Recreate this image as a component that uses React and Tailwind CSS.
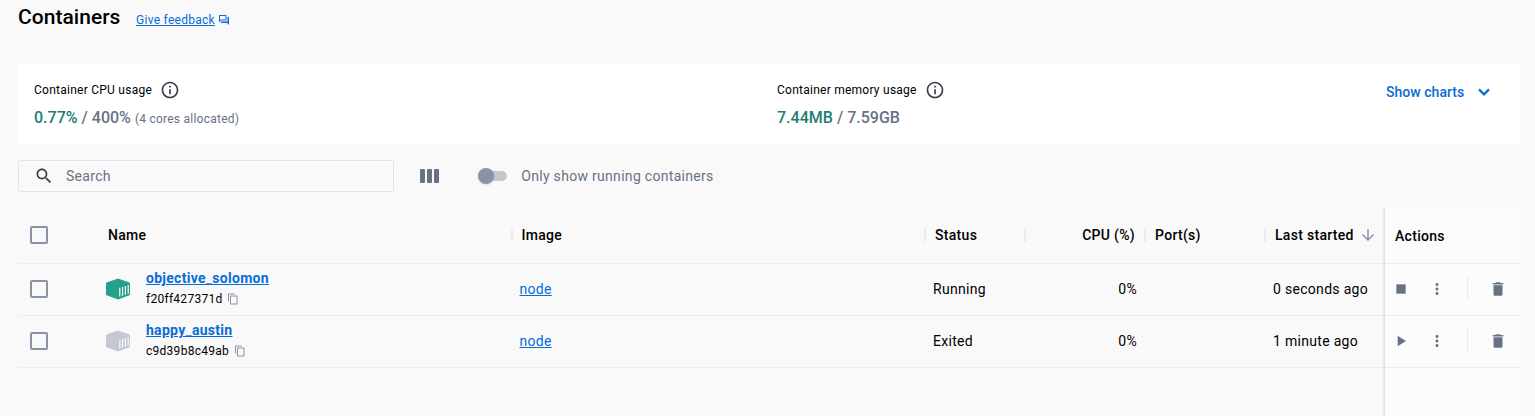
function Icon({ d, size, className = "" }) {
  return (
    <svg width={size} height={size} viewBox="0 0 24 24" fill="currentColor" className={`block shrink-0 ${className}`}>
      <path d={d} />
    </svg>
  );
}

const ICONS = {
  feedback: "M15 4v7H5.17L4 12.17V4h11m1-2H3c-.55 0-1 .45-1 1v14l4-4h10c.55 0 1-.45 1-1V3c0-.55-.45-1-1-1zm5 4h-2v9H6v2c0 .55.45 1 1 1h11l4 4V7c0-.55-.45-1-1-1z",
  info: "M11 7h2v2h-2zm0 4h2v6h-2zm1-9C6.48 2 2 6.48 2 12s4.48 10 10 10 10-4.48 10-10S17.52 2 12 2zm0 18c-4.41 0-8-3.59-8-8s3.59-8 8-8 8 3.59 8 8-3.59 8-8 8z",
  search: "M15.5 14h-.79l-.28-.27C15.41 12.59 16 11.11 16 9.5 16 5.91 13.09 3 9.5 3S3 5.91 3 9.5 5.91 16 9.5 16c1.61 0 3.09-.59 4.23-1.57l.27.28v.79l5 4.99L20.49 19l-4.99-5zm-6 0C7.01 14 5 11.99 5 9.5S7.01 5 9.5 5 14 7.01 14 9.5 11.99 14 9.5 14z",
  chevron: "M7 7.8 12 12.8l5-5L19 9.8l-7 7-7-7z",
  arrowDown: "M20 12l-1.41-1.41L13 16.17V4h-2v12.17l-5.58-5.59L4 12l8 8 8-8z",
  copy: "M16 1H4c-1.1 0-2 .9-2 2v14h2V3h12V1zm3 4H8c-1.1 0-2 .9-2 2v14c0 1.1.9 2 2 2h11c1.1 0 2-.9 2-2V7c0-1.1-.9-2-2-2zm0 16H8V7h11v14z",
  more: "M12 8c1.1 0 2-.9 2-2s-.9-2-2-2-2 .9-2 2 .9 2 2 2zm0 2c-1.1 0-2 .9-2 2s.9 2 2 2 2-.9 2-2-.9-2-2-2zm0 6c-1.1 0-2 .9-2 2s.9 2 2 2 2-.9 2-2-.9-2-2-2z",
  trash: "M6 19c0 1.1.9 2 2 2h8c1.1 0 2-.9 2-2V7H6v12zM19 4h-3.5l-1-1h-5l-1 1H5v2h14V4z",
  play: "M7 4v16l12.5-8z",
  stop: "M5 5h14v14H5z",
};

function Box() {
  return <span className="block size-[18px] shrink-0 rounded-[2px] border-2 border-[#8993a8]" />;
}

function Cube({ className }) {
  return (
    <svg width="24" height="22" viewBox="0 0 24 22" className={`block shrink-0 ${className}`}>
      <path fill="currentColor" d="M12 0.4 23.4 4.6Q24 4.9 24 5.5V16.3Q24 17 23.4 17.2L12 21.4 0.6 17.2Q0 17 0 16.3V5.5Q0 4.9 0.6 4.6Z" />
      <path stroke="#f9f9f9" strokeWidth="1.2" fill="none" d="M13.8 9.8V18.6M16.6 9V17.7M19.4 8V16.8M22.2 7V15.7" />
    </svg>
  );
}

function Info() {
  return <Icon d={ICONS.info} size={20} className="text-[#393f49]" />;
}

function HeadCell({ children, className = "", last }) {
  return (
    <div className={`flex h-[54px] items-center ${className}`}>
      <div className="flex min-w-0 flex-1 items-center">{children}</div>
      {!last && <span className="h-3.5 w-0.5 shrink-0 bg-[#ececec]" />}
    </div>
  );
}

const COLS = "grid grid-cols-[80px_415px_413px_100px_120px_120px_119px]";

const rows = [
  { name: "objective_solomon", id: "f20ff427371d", image: "node", status: "Running", cpu: "0%", started: "0 seconds ago", running: true },
  { name: "happy_austin", id: "c9d39b8c49ab", image: "node", status: "Exited", cpu: "0%", started: "1 minute ago", running: false },
];

function Row({ row }) {
  return (
    <div className={`${COLS} h-[52px] items-center border-b border-[#ececec] pb-0.5`}>
      <div className="pl-3"><Box /></div>
      <div className="flex h-[49px] items-center pl-2">
        <Cube className={row.running ? "text-[#27a08b]" : "text-[#c4c8d1]"} />
        <div className="pl-4">
          <a className="block text-sm leading-5 font-bold tracking-[0.28px] text-[#086dd7] underline underline-offset-1">{row.name}</a>
          <div className="flex items-center gap-[5px] pt-px text-xs leading-5 tracking-[0.27px]">
            <span>{row.id}</span>
            <Icon d={ICONS.copy} size={12} className="text-[#8993a8]" />
          </div>
        </div>
      </div>
      <a className="pl-[6.5px] text-[#086dd7] underline underline-offset-1">{row.image}</a>
      <div className="pl-[7px]">{row.status}</div>
      <div className="pr-[9px] text-right">{row.cpu}</div>
      <div />
      <div className="pl-[7px] whitespace-nowrap">{row.started}</div>
    </div>
  );
}

function Actions({ row }) {
  return (
    <div className="flex h-[52px] items-center border-b border-[#ececec] pb-0.5 text-[#677285]">
      <Icon d={row.running ? ICONS.stop : ICONS.play} size={16} className="mr-px ml-2" />
      <Icon d={ICONS.more} size={18} className="ml-[18px]" />
      <span className="ml-[21px] h-6 w-px bg-[#ececec]" />
      <Icon d={ICONS.trash} size={18} className="ml-[21px]" />
    </div>
  );
}

function Stat({ label, used, total, note }) {
  return (
    <div className="flex w-[743px] flex-col">
      <div className="flex h-5 items-center gap-2 text-xs tracking-[0.25px]">
        <span>{label}</span>
        <Info />
      </div>
      <div className="mt-1.5 flex items-baseline text-base leading-6 font-medium tracking-[0.01px] text-[#677285]">
        <span className="whitespace-pre"><span className="text-[#1c7f71]">{used}</span> / {total}</span>
        {note && <span className="ml-1 text-xs font-normal tracking-[0.24px]">{note}</span>}
      </div>
    </div>
  );
}

export default function App() {
  return (
    <div className="h-[416px] w-[1535px] overflow-hidden bg-[#f9f9f9] pr-[15px] pl-[18px] font-['Roboto',sans-serif] text-sm tracking-[0.3px] text-black">
      <header className="flex h-16 items-start">
        <h1 className="w-[102px] pt-[3px] text-[21px] leading-7 font-medium tracking-[0.03px]">Containers</h1>
        <a className="ml-4 pt-3 text-xs leading-4 tracking-[0.28px] text-[#086dd7] underline underline-offset-1">Give feedback</a>
        <Icon d={ICONS.feedback} size={12} className="mt-[14px] ml-[3px] text-[#086dd7]" />
      </header>

      <section className="flex h-20 bg-white pt-4 pl-4">
        <Stat label="Container CPU usage" used="0.77%" total="400%" note="(4 cores allocated)" />
        <Stat label="Container memory usage" used="7.44MB" total="7.59GB" />
        <button className="-ml-[134px] flex h-6 items-center gap-2.5 font-medium tracking-[0.04px] text-[#086dd7]">
          Show charts
          <Icon d={ICONS.chevron} size={20} />
        </button>
      </section>

      <div className="flex items-center pt-4">
        <div className="flex h-8 w-[376px] items-center rounded-[3px] border border-[#e1e2e6] pl-[15px] text-[#677285]">
          <Icon d={ICONS.search} size={20} className="text-[#393f49]" />
          <span className="ml-3">Search</span>
        </div>
        <div className="ml-[26px] flex gap-[1.75px] text-[#677285]">
          <span className="h-3.5 w-[5.25px] rounded-[1px] bg-current" />
          <span className="h-3.5 w-[5.25px] rounded-[1px] bg-current" />
          <span className="h-3.5 w-[5.25px] rounded-[1px] bg-current" />
        </div>
        <div className="ml-[38.5px] flex h-4 w-[29px] items-center">
          <span className="z-10 size-4 shrink-0 rounded-full bg-[#8993a8] shadow-sm" />
          <span className="-ml-3 h-2.5 w-[25px] shrink-0 rounded-full bg-[#c4c8d1]" />
        </div>
        <span className="ml-[14.5px] text-[#677285]">Only show running containers</span>
      </div>

      <div className="flex h-[224px] pt-4">
        <div className="w-[1367px]">
          <div className={`${COLS} h-14 border-b border-[#ececec] font-medium`}>
            <div className="flex h-[54px] items-center pl-3"><Box /></div>
            <HeadCell className="pl-2.5">Name</HeadCell>
            <HeadCell className="pl-[8.5px]">Image</HeadCell>
            <HeadCell className="pl-[9px]">Status</HeadCell>
            <HeadCell><span className="ml-auto pr-[9px]">CPU (%)</span></HeadCell>
            <HeadCell className="pl-[9px]">Port(s)</HeadCell>
            <HeadCell className="pl-[9px]" last>
              <span className="whitespace-nowrap">Last started</span>
              <Icon d={ICONS.arrowDown} size={18} className="ml-[5px] text-[#8993a8]" />
            </HeadCell>
          </div>
          {rows.map((row) => <Row key={row.id} row={row} />)}
        </div>
        <div className="h-[208px] w-[135px] bg-[#fcfcfc] shadow-[-1px_0_3px_rgba(0,0,0,0.15)] [clip-path:inset(0_0_0_-6px)]">
          <div className="flex h-14 items-center border-b border-[#ececec] pl-2.5 font-medium">Actions</div>
          {rows.map((row) => <Actions key={row.id} row={row} />)}
        </div>
      </div>
    </div>
  );
}
